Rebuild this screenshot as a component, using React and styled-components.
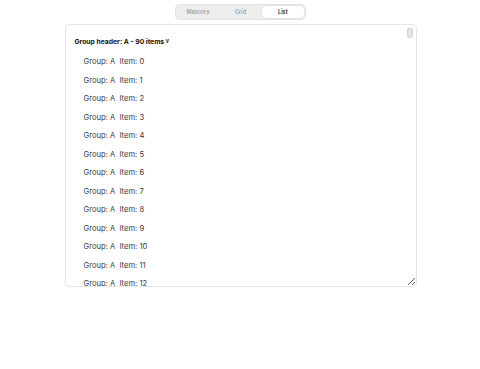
import React from 'react';
import styled, { createGlobalStyle } from 'styled-components';

const GlobalStyle = createGlobalStyle`
  html, body {
    margin: 0;
    padding: 0;
    background: #ffffff;
    font-family: Inter, "Noto Sans", sans-serif;
    color: #1a1a1a;
  }
`;

const modes = ['Masonry', 'Grid', 'List'];
const items = Array.from({ length: 14 }, (_, i) => i);

const App = () => (
  <>
    <GlobalStyle />
    <Page>
      <Segmented>
        {modes.map((m) => (
          <Segment key={m} active={m === 'List'}>{m}</Segment>
        ))}
      </Segmented>
      <Panel>
        <Scroller>
          <GroupHeader>Group header: A - 90 items<Chevron>v</Chevron></GroupHeader>
          {items.map((i) => (
            <Row key={i}>Group: A&nbsp;&nbsp;Item: {i}</Row>
          ))}
        </Scroller>
        <Thumb />
      </Panel>
    </Page>
  </>
);

const Page = styled.div`
  display: flex;
  flex-direction: column;
  align-items: center;
  padding-top: 4px;
  gap: 4px;
`;

const Segmented = styled.div`
  display: flex;
  width: 131px;
  height: 16px;
  box-sizing: border-box;
  padding: 1px;
  background: #eeeeee;
  border: 1px solid #e2e2e2;
  border-radius: 5px;
  margin-left: 1px;
`;

const Segment = styled.div`
  flex: 1;
  display: flex;
  align-items: center;
  justify-content: center;
  font-size: 5.5px;
  font-weight: ${(p) => (p.active ? 600 : 500)};
  color: ${(p) => (p.active ? '#222222' : '#9a9a9a')};
  background: ${(p) => (p.active ? '#ffffff' : 'transparent')};
  border-radius: 4px;
  box-shadow: ${(p) => (p.active ? '0 0 0 0.5px #dcdcdc' : 'none')};
`;

const Panel = styled.div`
  position: relative;
  width: 352px;
  height: 263px;
  box-sizing: border-box;
  border: 1px solid #e6e6e6;
  border-radius: 4px;
  resize: both;
  overflow: hidden;
  margin-left: 1px;
`;

const Scroller = styled.div`
  height: 100%;
  overflow: hidden;
  padding: 11px 0 0 9px;
  box-sizing: border-box;
`;

const GroupHeader = styled.div`
  display: flex;
  align-items: center;
  height: 10px;
  font-size: 6.8px;
  font-weight: 700;
  color: #111111;
  margin-bottom: 6.5px;
`;

const Chevron = styled.span`
  font-size: 5.5px;
  font-weight: 600;
  margin-left: 1.5px;
`;

const Row = styled.div`
  display: flex;
  align-items: center;
  height: 18.5px;
  padding-left: 9px;
  font-size: 7.6px;
  font-weight: 400;
  color: #3a3a3a;
  white-space: nowrap;
`;

const Thumb = styled.div`
  position: absolute;
  top: 3px;
  right: 3px;
  width: 4px;
  height: 8px;
  border-radius: 2px;
  background: #e4e4e4;
  border: 0.5px solid #d2d2d2;
`;

export default App;
